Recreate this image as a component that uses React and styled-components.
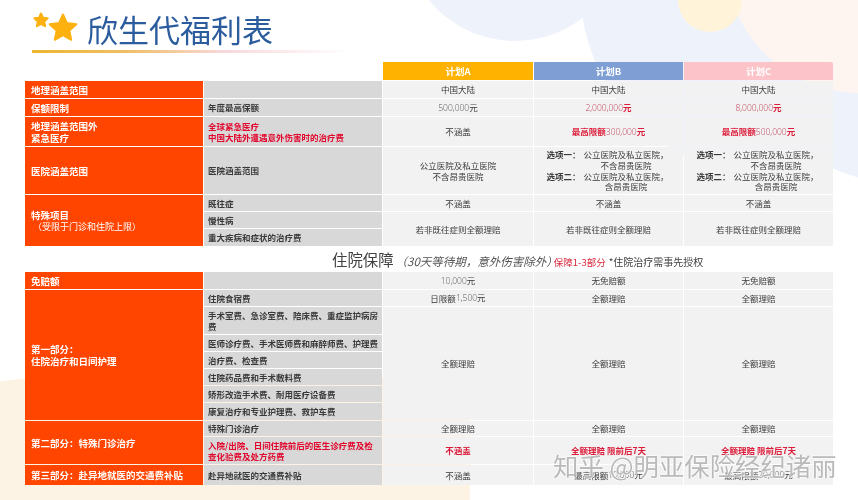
import React from 'react'
import styled, { createGlobalStyle } from 'styled-components'

const GlobalStyle = createGlobalStyle`
    html, body {
        margin: 0;
        padding: 0;
        background: #fff;
    }
    body {
        font-family: "Noto Sans CJK SC", "Noto Sans", sans-serif;
    }
`

const Page = styled.div`
    position: relative;
    width: 858px;
    height: 500px;
    overflow: hidden;
    background: #fff;
    padding: 0 25px;
    box-sizing: border-box;
    filter: blur(0.3px);
`

// background decoration
const Circle = styled.div`
    position: absolute;
    left: ${p => p.$x - p.$r}px;
    top: ${p => p.$y - p.$r}px;
    width: ${p => p.$r * 2}px;
    height: ${p => p.$r * 2}px;
    border-radius: 50%;
    background: ${p => p.$color};
`

const BottomBlob = styled.div`
    position: absolute;
    left: -60px;
    top: 378px;
    width: 530px;
    height: 140px;
    background: #fdf3e4;
    border-radius: 110px 24px 0 0 / 30px 20px 0 0;
`

const Content = styled.div`
    position: relative;
    z-index: 1;
`

const Header = styled.header`
    height: 62px;
    padding-left: 7px;
    box-sizing: border-box;
`

const TitleRow = styled.div`
    height: 50px;
    display: flex;
    align-items: center;
    gap: 5px;
`

const StarIcon = styled.svg`
    margin-top: 6px;
`

const Title = styled.h1`
    margin: 0;
    font-size: 31px;
    line-height: 40px;
    font-weight: 400;
    color: #2b5c9e;
    position: relative;
    top: 4px;
`

const Rule = styled.div`
    width: 320px;
    height: 3px;
    background: linear-gradient(90deg, #ecb62f 0%, #efbf66 30%, #f8d8dc 60%, #fff 100%);
`

const Table = styled.div`
    display: grid;
    grid-template-columns: 178px 178px 150px 149px 149px;
    grid-template-rows: ${p => p.$rows};
    gap: 1px;
`

const Plan = styled.div`
    grid-column: ${p => p.$col || 'auto'};
    background: ${p => p.$color};
    color: #fff;
    font-size: 9.5px;
    font-weight: 700;
    display: flex;
    align-items: center;
    justify-content: center;
    border-top-right-radius: ${p => (p.$last ? '2px' : '0')};
`

const Section = styled.div`
    grid-row: span ${p => p.$span || 1};
    background: #ff4500;
    color: #fff;
    font-size: 9.5px;
    line-height: 12px;
    font-weight: 700;
    padding-left: 6px;
    display: flex;
    flex-direction: column;
    justify-content: center;
`

const SectionNote = styled.span`
    font-weight: 400;
    font-size: 9px;
    padding-left: 2px;
`

const Item = styled.div`
    background: #d8d8d8;
    color: ${p => (p.$red ? '#e2062c' : '#3a3a3a')};
    font-size: 8.5px;
    line-height: 10.5px;
    font-weight: 700;
    padding: 0 4px;
    display: flex;
    align-items: center;
`

const Value = styled.div`
    grid-row: span ${p => p.$span || 1};
    background: #f2f2f2;
    color: ${p => (p.$red ? '#dc1c3a' : '#3a3a3a')};
    font-size: 8.5px;
    line-height: 10.7px;
    font-weight: ${p => (p.$red ? 700 : 400)};
    text-align: center;
    display: flex;
    align-items: center;
    justify-content: center;
`

const Amount = styled.span`
    font-family: "Open Sans", sans-serif;
    font-weight: 300;
    color: ${p => (p.$red ? '#c0405a' : '#555')};
`

const Options = styled.div`
    display: grid;
    grid-template-columns: auto auto;
    column-gap: 3px;
    margin-left: -2px;
`

const OptionName = styled.span`
    font-weight: 700;
`

const CoverBar = styled.div`
    height: 26px;
    padding-left: 307px;
    display: flex;
    align-items: baseline;
    line-height: 26px;
    white-space: nowrap;
`

const CoverTitle = styled.span`
    font-size: 15.4px;
    color: #404040;
`

const CoverNote = styled.span`
    font-size: 11.5px;
    font-style: italic;
    color: #555;
    margin-left: 2px;
`

const CoverRed = styled.span`
    font-size: 9.5px;
    color: #d8283c;
    margin-left: -4px;
`

const CoverAuth = styled.span`
    font-size: 10px;
    color: #404040;
    margin-left: 3px;
`

const Watermark = styled.div`
    position: absolute;
    z-index: 2;
    left: 553px;
    top: 447px;
    font-size: 25.4px;
    line-height: 36px;
    white-space: nowrap;
    color: rgba(140, 140, 140, 0.6);
    text-shadow: 1px 0 0 rgba(255, 255, 255, 0.6), -1px 0 0 rgba(255, 255, 255, 0.6), 0 1px 0 rgba(255, 255, 255, 0.6), 0 -1px 0 rgba(255, 255, 255, 0.6);
`

const starPoints = (cx, cy, r) => {
    let points = []
    for (let i = 0; i < 10; i++) {
        let radius = i % 2 === 0 ? r : r * 0.48
        let angle = -Math.PI / 2 + (i * Math.PI) / 5
        points.push(`${cx + radius * Math.cos(angle)},${cy + radius * Math.sin(angle)}`)
    }
    return points.join(' ')
}

const Stars = () => (
    <StarIcon width="50" height="36" viewBox="0 0 50 36">
        <g fill="#fdb10f" stroke="#fdb10f" strokeWidth="2" strokeLinejoin="round">
            <polygon points={starPoints(9, 10.5, 7)} />
            <polygon points={starPoints(31, 18.5, 14)} />
        </g>
    </StarIcon>
)

const Money = ({ value, red }) => (
    <span>
        <Amount $red={red}>{value}</Amount>元
    </span>
)

const HospitalOptions = () => (
    <Options>
        <OptionName>选项一：</OptionName>
        <span>公立医院及私立医院，<br />不含昂贵医院</span>
        <OptionName>选项二：</OptionName>
        <span>公立医院及私立医院，<br />含昂贵医院</span>
    </Options>
)

const App = () => (
    <Page>
        <GlobalStyle />
        <Circle $x={770} $y={-13} $r={190} $color="#eef2fa" />
        <Circle $x={900} $y={20} $r={163} $color="#eef2fa" />
        <Circle $x={515} $y={-70} $r={111} $color="#eef2fa" />
        <Circle $x={860} $y={-42} $r={135} $color="#fef5f1" />
        <Circle $x={710} $y={0} $r={32} $color="#fff3d9" />
        <BottomBlob />

        <Content>
            <Header>
                <TitleRow>
                    <Stars />
                    <Title>欣生代福利表</Title>
                </TitleRow>
                <Rule />
            </Header>

            <Table $rows="18px 17px 17px 29px 47px 16px 16px 17px">
                <Plan $col="3" $color="#ffb300">计划A</Plan>
                <Plan $color="#7f9fd4">计划B</Plan>
                <Plan $color="#fcc3c8" $last>计划C</Plan>

                <Section>地理涵盖范围</Section>
                <Item />
                <Value>中国大陆</Value>
                <Value>中国大陆</Value>
                <Value>中国大陆</Value>

                <Section>保额限制</Section>
                <Item>年度最高保额</Item>
                <Value><Money value="500,000" /></Value>
                <Value $red><Money value="2,000,000" red /></Value>
                <Value $red><Money value="8,000,000" red /></Value>

                <Section>地理涵盖范围外<br />紧急医疗</Section>
                <Item $red>全球紧急医疗<br />中国大陆外遭遇意外伤害时的治疗费</Item>
                <Value>不涵盖</Value>
                <Value $red><span>最高限额<Amount $red>300,000</Amount>元</span></Value>
                <Value $red><span>最高限额<Amount $red>500,000</Amount>元</span></Value>

                <Section>医院涵盖范围</Section>
                <Item>医院涵盖范围</Item>
                <Value>公立医院及私立医院<br />不含昂贵医院</Value>
                <Value><HospitalOptions /></Value>
                <Value><HospitalOptions /></Value>

                <Section $span={3}>
                    特殊项目
                    <SectionNote>（受限于门诊和住院上限）</SectionNote>
                </Section>
                <Item>既往症</Item>
                <Value>不涵盖</Value>
                <Value>不涵盖</Value>
                <Value>不涵盖</Value>

                <Item>慢性病</Item>
                <Value $span={2}>若非既往症则全额理赔</Value>
                <Value $span={2}>若非既往症则全额理赔</Value>
                <Value $span={2}>若非既往症则全额理赔</Value>
                <Item>重大疾病和症状的治疗费</Item>
            </Table>

            <CoverBar>
                <CoverTitle>住院保障</CoverTitle>
                <CoverNote>（30天等待期，意外伤害除外）</CoverNote>
                <CoverRed>保障1-3部分</CoverRed>
                <CoverAuth>*住院治疗需事先授权</CoverAuth>
            </CoverBar>

            <Table $rows="17px 16px 27px 16px 16px 16px 16px 17px 15px 27px 20px">
                <Section>免赔额</Section>
                <Item />
                <Value><Money value="10,000" /></Value>
                <Value>无免赔额</Value>
                <Value>无免赔额</Value>

                <Section $span={7}>第一部分：<br />住院治疗和日间护理</Section>
                <Item>住院食宿费</Item>
                <Value>日限额<Money value="1,500" /></Value>
                <Value>全额理赔</Value>
                <Value>全额理赔</Value>

                <Item>手术室费、急诊室费、陪床费、重症监护病房费</Item>
                <Value $span={6}>全额理赔</Value>
                <Value $span={6}>全额理赔</Value>
                <Value $span={6}>全额理赔</Value>
                <Item>医师诊疗费、手术医师费和麻醉师费、护理费</Item>
                <Item>治疗费、检查费</Item>
                <Item>住院药品费和手术敷料费</Item>
                <Item>矫形改造手术费、耐用医疗设备费</Item>
                <Item>康复治疗和专业护理费、救护车费</Item>

                <Section $span={2}>第二部分：特殊门诊治疗</Section>
                <Item>特殊门诊治疗</Item>
                <Value>全额理赔</Value>
                <Value>全额理赔</Value>
                <Value>全额理赔</Value>

                <Item $red>入院/出院、日间住院前后的医生诊疗费及检查化验费及处方药费</Item>
                <Value $red>不涵盖</Value>
                <Value $red>全额理赔 限前后7天</Value>
                <Value $red>全额理赔 限前后7天</Value>

                <Section>第三部分：赴异地就医的交通费补贴</Section>
                <Item>赴异地就医的交通费补贴</Item>
                <Value>不涵盖</Value>
                <Value>最高限额<Money value="10,000" /></Value>
                <Value>最高限额<Money value="20,000" /></Value>
            </Table>
        </Content>

        <Watermark>知乎 @明亚保险经纪诸丽</Watermark>
    </Page>
)

export default App
